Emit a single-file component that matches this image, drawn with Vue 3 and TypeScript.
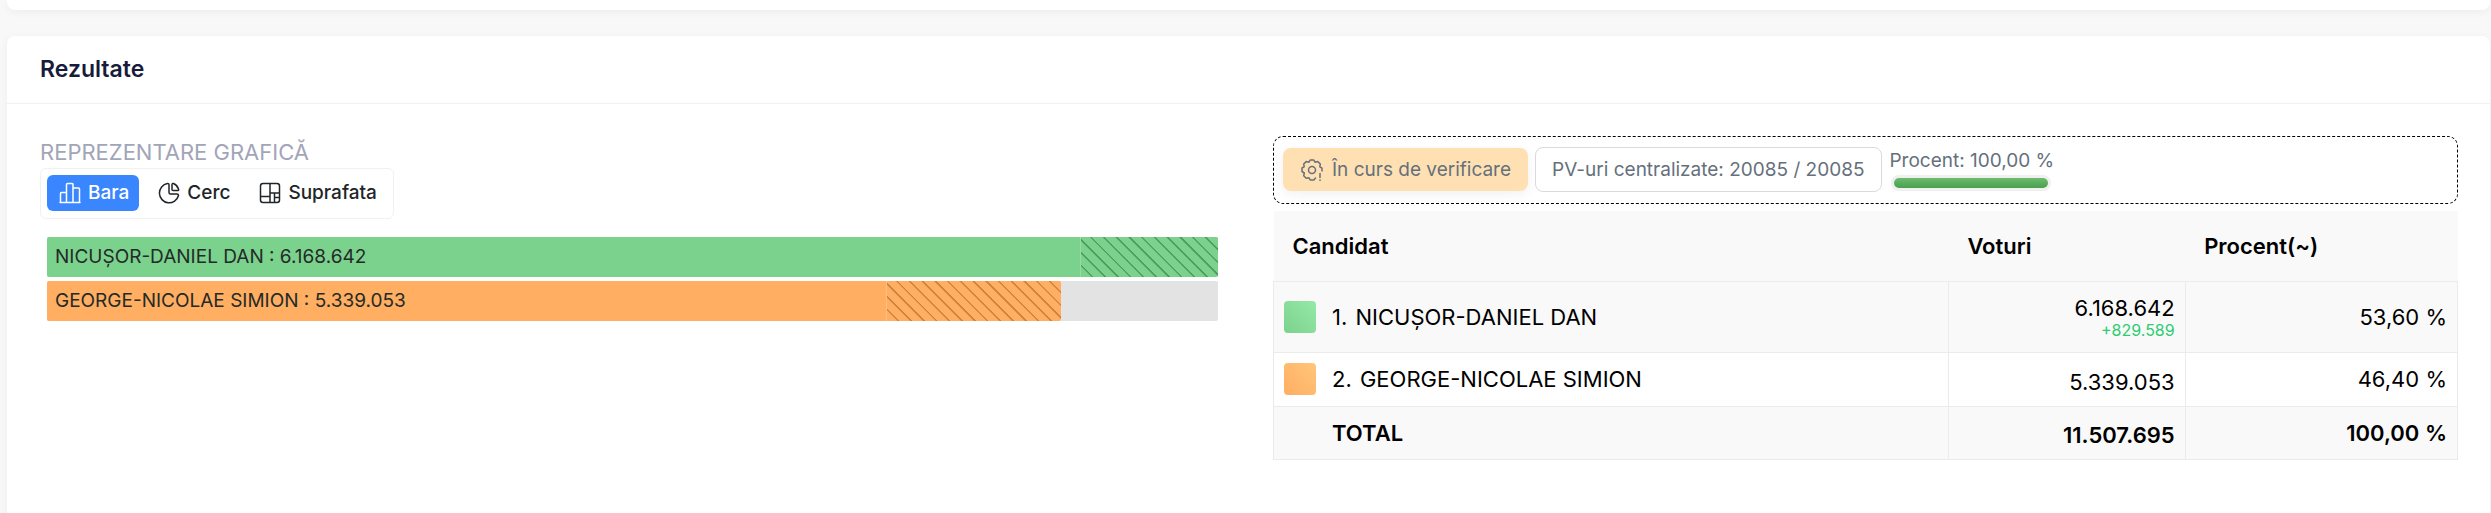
<script setup lang="ts">
import { ref } from 'vue'

interface Candidate {
  name: string
  votes: number
  share: string
  tone: string
  fill: number
  solid: number
}

type View = 'bara' | 'cerc' | 'suprafata'

const view = ref<View>('bara')
const candidates: Candidate[] = [
  { name: 'NICUȘOR-DANIEL DAN', votes: 6168642, share: '53,60 %', tone: 'green', fill: 100, solid: 88.3 },
  { name: 'GEORGE-NICOLAE SIMION', votes: 5339053, share: '46,40 %', tone: 'orange', fill: 86.55, solid: 82.9 },
]
const format = (n: number): string => String(n).replace(/\B(?=(\d{3})+$)/g, '.')
const lead = candidates[0].votes - candidates[1].votes
const total = candidates[0].votes + candidates[1].votes
</script>

<template>
  <main class="page">
    <section class="card previous"></section>
    <section class="card results">
      <header class="card-header"><h2>Rezultate</h2></header>
      <div class="columns">
        <div class="chart">
          <h3>REPREZENTARE GRAFICĂ</h3>
          <div class="switcher">
            <button type="button" :class="{ active: view === 'bara' }" @click="view = 'bara'">
              <svg viewBox="0 0 22 22"><path d="M1 20.500H21M1.500 20V11.500Q1.500 10.500 2.500 10.500H7.500M7.500 20V2.500Q7.500 1.500 8.500 1.500H13Q14 1.500 14 2.500V20M14 6H19.500Q20.500 6 20.500 7V20" /></svg>
              Bara
            </button>
            <button type="button" :class="{ active: view === 'cerc' }" @click="view = 'cerc'">
              <svg viewBox="0 0 22 22"><path d="M9.500 1.500A9.700 9.700 0 1 0 20.500 13.500Q20.500 12 19 12H12.500Q11 12 11 10.500V3Q11 1.300 9.500 1.500ZM14 2.500V7.500Q14 8.500 15 8.500H20Q21 8.500 20.500 7A9 9 0 0 0 15.500 1.500Q14 1 14 2.500Z" /></svg>
              Cerc
            </button>
            <button type="button" :class="{ active: view === 'suprafata' }" @click="view = 'suprafata'">
              <svg viewBox="0 0 22 22"><path d="M4 1.500H18Q20.500 1.500 20.500 4V18Q20.500 20.500 18 20.500H4Q1.500 20.500 1.500 18V4Q1.500 1.500 4 1.500ZM11 1.500V20.500M1.500 14.500H11M11 11H20.500M15.500 11V20.500M15.500 15.500H20.500" /></svg>
              Suprafata
            </button>
          </div>
          <div class="bars">
            <div v-for="c in candidates" :key="c.name" class="track">
              <div class="fill" :class="c.tone" :style="{ width: c.fill + '%' }">
                <div class="solid" :style="{ width: c.solid + '%' }">{{ c.name }} : {{ format(c.votes) }}</div>
                <div class="hatch"></div>
              </div>
            </div>
          </div>
        </div>

        <div class="data">
          <div class="status">
            <span class="tag verifying">
              <svg viewBox="0 0 22 22"><path d="M14.500 19 12.800 21H9.200L8 18.800 5.200 19.300 2.700 16.800 3.300 14 1 12.500V9L3.200 7.800 2.700 5 5.200 2.600 8 3.200 9.200 1H12.800L14 3.200 16.800 2.600 19.300 5 18.800 7.800 21 9.200V12M19 14.500V18.500M19 21V21.500" /><circle cx="11" cy="11" r="3.500" /></svg>
              În curs de verificare
            </span>
            <span class="tag outlined">PV-uri centralizate: 20085 / 20085</span>
            <div class="progress">
              <span>Procent: 100,00 %</span>
              <div class="meter"><div class="meter-fill"></div></div>
            </div>
          </div>
          <table>
            <colgroup><col class="c-name" /><col class="c-votes" /><col class="c-share" /></colgroup>
            <thead>
              <tr><th>Candidat</th><th>Voturi</th><th>Procent(~)</th></tr>
            </thead>
            <tbody>
              <tr v-for="(c, i) in candidates" :key="c.name" :class="{ first: i === 0 }">
                <td><div class="candidate"><i class="swatch" :class="c.tone"></i><span><span class="rank">{{ i + 1 }}.</span> {{ c.name }}</span></div></td>
                <td class="number votes">{{ format(c.votes) }}<small v-if="i === 0">+{{ format(lead) }}</small></td>
                <td class="number">{{ c.share }}</td>
              </tr>
              <tr class="total">
                <td><div class="candidate"><i class="swatch"></i><span>TOTAL</span></div></td>
                <td class="number votes">{{ format(total) }}</td>
                <td class="number">100,00 %</td>
              </tr>
            </tbody>
          </table>
        </div>
      </div>
    </section>
  </main>
</template>

<style>
body { margin: 0; background: #f8f8f8; overflow: hidden; }
</style>

<style scoped>
* { box-sizing: border-box; }
.page { height: 100vh; padding: 0 1px 0 7px; display: flex; flex-direction: column; gap: 26px; overflow: hidden; font-family: Inter, "Liberation Sans", sans-serif; color: #000; background: #f8f8f8; }
.card { background: #fff; box-shadow: 0 2px 8px rgba(0, 0, 0, .05); }
.previous { flex: none; height: 10px; border-radius: 0 0 8px 8px; }
.results { flex: 1; border-radius: 8px 8px 0 0; }
.card-header { height: 68px; padding: 0 33px 2px; display: flex; align-items: center; border-bottom: 1px solid #f1f1f1; }
h2, h3 { margin: 0; }
h2 { font-size: 23px; line-height: 28px; font-weight: 600; color: #181c3a; }
.columns { display: grid; grid-template-columns: 1fr 1fr; gap: 48px; padding: 32px 32px 32px 33px; }
h3 { font-size: 22px; line-height: 32px; font-weight: 400; color: #a1a5b7; }
.switcher { display: inline-flex; gap: 7px; height: 51px; padding: 6px; border: 1px solid #f1f1f1; border-radius: 6px; }
.switcher button { display: flex; align-items: center; gap: 7px; height: 36px; padding: 0 10px 0 12px; border: 0; border-radius: 6px; background: none; font: 500 19px/24px Inter, sans-serif; color: #212529; }
.switcher button.active { background: #3a86ff; color: #fff; }
svg { width: 22px; height: 22px; flex: none; fill: none; stroke: currentColor; stroke-width: 1.5; stroke-linejoin: round; stroke-linecap: round; }
.bars { display: flex; flex-direction: column; gap: 4px; padding: 18px 7px 0; }
.track { height: 40px; background: #e3e3e3; border-radius: 2px; }
.fill { display: flex; height: 100%; border-radius: 2px; overflow: hidden; font-size: 19px; line-height: 40px; color: #242a28; }
.fill.green { background: #7bd28d; --stripe: #4f9c5f; }
.fill.orange { background: #ffae62; --stripe: #cb8440; }
.solid { padding-left: 8px; white-space: nowrap; border-right: 1px solid rgba(255, 255, 255, .2); }
.hatch { flex: 1; background: repeating-linear-gradient(45deg, transparent 0 7px, var(--stripe) 8px 9px); }
.status { display: flex; align-items: flex-start; gap: 7px; height: 68px; padding: 10px 9px; border: 1px dashed #000; border-radius: 10px; color: #65707c; font-size: 19px; line-height: 24px; }
.tag { display: flex; align-items: center; gap: 9px; height: 45px; border-radius: 8px; white-space: nowrap; }
.verifying { height: 43px; margin-top: 1px; padding: 0 17px 0 18px; background: #ffe0b2; box-shadow: 0 3px 12px rgba(0, 0, 0, .06); }
.outlined { padding: 0 17px 0 16px; border: 1px solid #d8dadc; }
.progress { display: flex; flex-direction: column; gap: 2px; padding-top: 2px; }
.meter { width: 160px; height: 16px; margin-left: 2px; padding: 3px; border-radius: 8px; background: #f0f0f0; }
.meter-fill { height: 10px; border-radius: 5px; background: linear-gradient(#6dbb70, #48a04c); }
table { width: 100%; margin-top: 7px; table-layout: fixed; border-collapse: collapse; font-size: 22px; line-height: 26px; }
.c-name { width: 57%; }
.c-votes { width: 20%; }
.c-share { width: 23%; }
th { height: 70px; padding: 0 19px; background: #f9f9f9; text-align: left; font-weight: 600; }
td { height: 54px; padding: 0 10px; border: 1px solid #ebebeb; }
.first td { height: 71px; }
.first td, .total td { background: #f9f9f9; }
.total td { height: 53px; font-weight: 600; }
.candidate { display: flex; align-items: center; gap: 16px; }
.rank { margin-right: 2px; }
.swatch { width: 32px; height: 32px; border-radius: 4px; }
.swatch.green { background: linear-gradient(45deg, #7bd28d, #95e9a6); }
.swatch.orange { background: linear-gradient(45deg, #ffae62, #ffc67a); }
.number { text-align: right; }
.votes { padding-top: 5px; }
.first .votes { padding-top: 0; }
small { display: block; font-size: 16px; line-height: 18px; color: #2ecc71; }
</style>
